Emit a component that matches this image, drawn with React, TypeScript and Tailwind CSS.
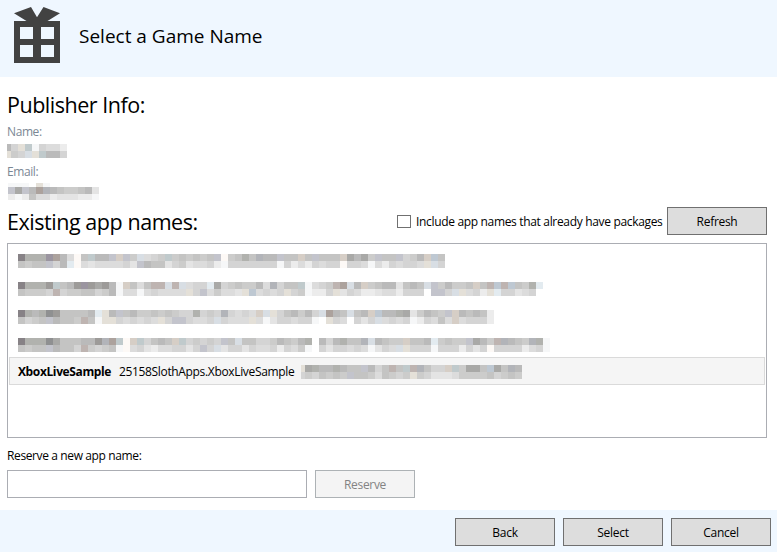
const tones: Record<string, string> = {
  a: '#878286', b: '#8f9091', c: '#9d9b99', d: '#a9a9a7', e: '#b1b2ae', f: '#bababa',
  g: '#c4c4c3', h: '#cccccb', i: '#d4d4d4', j: '#dcdcdc', k: '#e4e4e4', l: '#ececec', m: '#f6f7f8',
  A: '#9b95a0', B: '#aca29d', C: '#c3c4cc', D: '#d6cec6', E: '#d8dee4', F: '#e4e0d8',
  G: '#c0cacc', H: '#beb4b1', I: '#b2b4b9', J: '#bec8d2', K: '#e3ebf0', L: '#fdf9f6',
};

type MosaicProps = { rows: string[]; heights?: number[]; first?: number; label: string };

function Mosaic({ rows, heights = [7, 7], first = 7, label }: MosaicProps) {
  const width = first + (Math.max(...rows.map((r) => r.length)) - 1) * 7;
  const total = heights.reduce((s, h) => s + h, 0);
  let y = 0;
  return (
    <svg width={width} height={total} shapeRendering="crispEdges" className="block shrink-0" role="img" aria-label={label}>
      {rows.map((row, r) => {
        const top = y;
        y += heights[r];
        return row.split('').map((c, i) =>
          c === '.' ? null : (
            <rect key={`${r}-${i}`} x={i === 0 ? 0 : first + (i - 1) * 7} y={top} width={i === 0 ? first : 7} height={heights[r]} fill={tones[c]} />
          ),
        );
      })}
    </svg>
  );
}

const hiddenApps = [
  [
    'aeeeABfjLgGffCDChEjihGhghghgCLhgegIffCggDgCgggDdfdhCggCihfDJg',
    'ghggCifKLjkjjjjikCfggkihkjjilmiiiiiiimiljlijiiLiijmjlijiijFEi',
  ],
  [
    'aeeecGgfcAcdcfmDgjgHHEHEjiiKdihghhfjIiggGmjihHBEfDhgffkgfgEChfhhgDgHJHJgheK',
    'ghhhiHihhggihfmjjmjijjjjFiCjhjjkFJjijiFihmlliFkijllkjjliii.CCiEFjilFKiikji',
  ],
  [
    'aefebcggggfKFfCgfhhghghiieihiIijijDEFigfhfiEBfgEgfDJffedkhfghCDfgfgl',
    'gihgCfgghHgmFFijijijFiCCijjiEijjjFjmkiijiim.Fij.ikiEjijimlijgjDjiiil',
  ],
  [
    'aeeebdgggffcIBGLDGigfgDGihihiCgEggiihfghfe.fifeggIEfghhDggfKhghhCdfhHIfghIem',
    'ghggCfggiHhihgmLjikljjiikiCiEkiikijjilijhm.ikiijijmkijEFiiimiiilikiLiiiiljim',
  ],
];

function Heading({ children, className }: { children: string; className: string }) {
  return <h2 className={`whitespace-nowrap text-[21.5px] leading-7 ${className}`}>{children}</h2>;
}

function Button({ children, disabled = false }: { children: string; disabled?: boolean }) {
  return (
    <button
      disabled={disabled}
      className={`h-7 w-[100px] shrink-0 border pt-0.5 text-[12px] leading-4 tracking-[-0.3px] ${
        disabled ? 'border-[#adb2b5] bg-[#f4f4f4] text-[#838383]' : 'border-[#707070] bg-[#dddddd] text-black'
      }`}
    >
      {children}
    </button>
  );
}

export default function App() {
  return (
    <div className="flex h-[552px] w-[777px] flex-col overflow-hidden bg-white font-['Open_Sans','Noto_Sans',sans-serif] text-[12px] leading-4 text-black">
      <header className="flex h-[77px] shrink-0 items-start bg-[#eff7ff] pl-3.5">
        <svg width="46" height="63" viewBox="0 0 46 63" fill="#424242" className="shrink-0" aria-hidden="true">
          <path d="M0 13.3 17 7 23 17.3 29.5 7 46 13.3 33.5 21H46V63H0V21H12.5Z" />
          <path fill="#eff7ff" d="M6 27H19V39H6ZM27 27H40V39H27ZM6 45H19V57H6ZM27 45H40V57H27Z" />
        </svg>
        <h1 className="ml-[19px] mt-[22px] whitespace-nowrap text-[19px] leading-7">Select a Game Name</h1>
      </header>

      <main className="flex h-[433px] shrink-0 flex-col pl-[7px] pr-2.5">
        <Heading className="mt-[14px] tracking-[-0.47px]">Publisher Info:</Heading>
        <p className="mt-[5px] h-4 text-[#7b8794] tracking-[-0.4px]">Name:</p>
        <div className="mt-1">
          <Mosaic label="Publisher name" rows={['fiFGmijjl', 'FhiEFGffi']} first={4} />
        </div>
        <p className="mt-1.5 h-4 text-[#7b8794] tracking-[-0.4px]">Email:</p>
        <div className="ml-px mt-[3px]">
          <Mosaic label="Publisher email" rows={['mmm.Fm', 'CdCfBIfghhgfk', 'lmlgjjlkkkllm']} heights={[4, 7, 6]} />
        </div>
        <div className="mt-[7px] flex h-7 items-center">
          <Heading className="mt-0.5 tracking-[-0.45px]">Existing app names:</Heading>
          <label className="ml-auto flex items-center">
            <span className="mt-px h-[13px] w-3.5 border border-[#707070] bg-white" />
            <span className="ml-[5px] mr-1 mt-0.5 w-[247px] whitespace-nowrap tracking-[-0.33px]">Include app names that already have packages</span>
          </label>
          <Button>Refresh</Button>
        </div>

        <section className="mt-2 flex h-[195px] shrink-0 flex-col border border-[#abadb3] px-px pt-px">
          {hiddenApps.map((rows, i) => (
            <div key={i} className="flex h-7 shrink-0 items-start pl-[9px] pt-[9px]">
              <Mosaic label="Hidden app" rows={rows} />
            </div>
          ))}
          <div className="flex h-7 shrink-0 items-center border border-[#dadada] bg-[#f5f5f5] pl-2">
            <span className="mt-0.5 w-[101px] whitespace-nowrap font-bold tracking-[-0.38px]">XboxLiveSample</span>
            <span className="mt-0.5 w-[182px] whitespace-nowrap tracking-[-0.34px]">25158SlothApps.XboxLiveSample</span>
            <div className="mt-px">
              <Mosaic label="Hidden app identity" first={4} rows={['FdeffefggCfigHgGHIgiiDGhddgJdgIf', 'ihighghCgghjghihFhikkkjhhhhgihgh']} />
            </div>
          </div>
        </section>

        <label className="mt-2.5 h-4 whitespace-nowrap tracking-[-0.38px]">Reserve a new app name:</label>
        <div className="mt-1.5 flex gap-2">
          <input aria-label="New app name" className="h-7 w-[300px] border border-[#abadb3] bg-white px-1 outline-none" />
          <Button disabled>Reserve</Button>
        </div>
      </main>

      <footer className="flex h-[42px] shrink-0 justify-end gap-2 bg-[#eff7ff] pr-1.5 pt-2">
        <Button>Back</Button>
        <Button>Select</Button>
        <Button>Cancel</Button>
      </footer>
    </div>
  );
}
